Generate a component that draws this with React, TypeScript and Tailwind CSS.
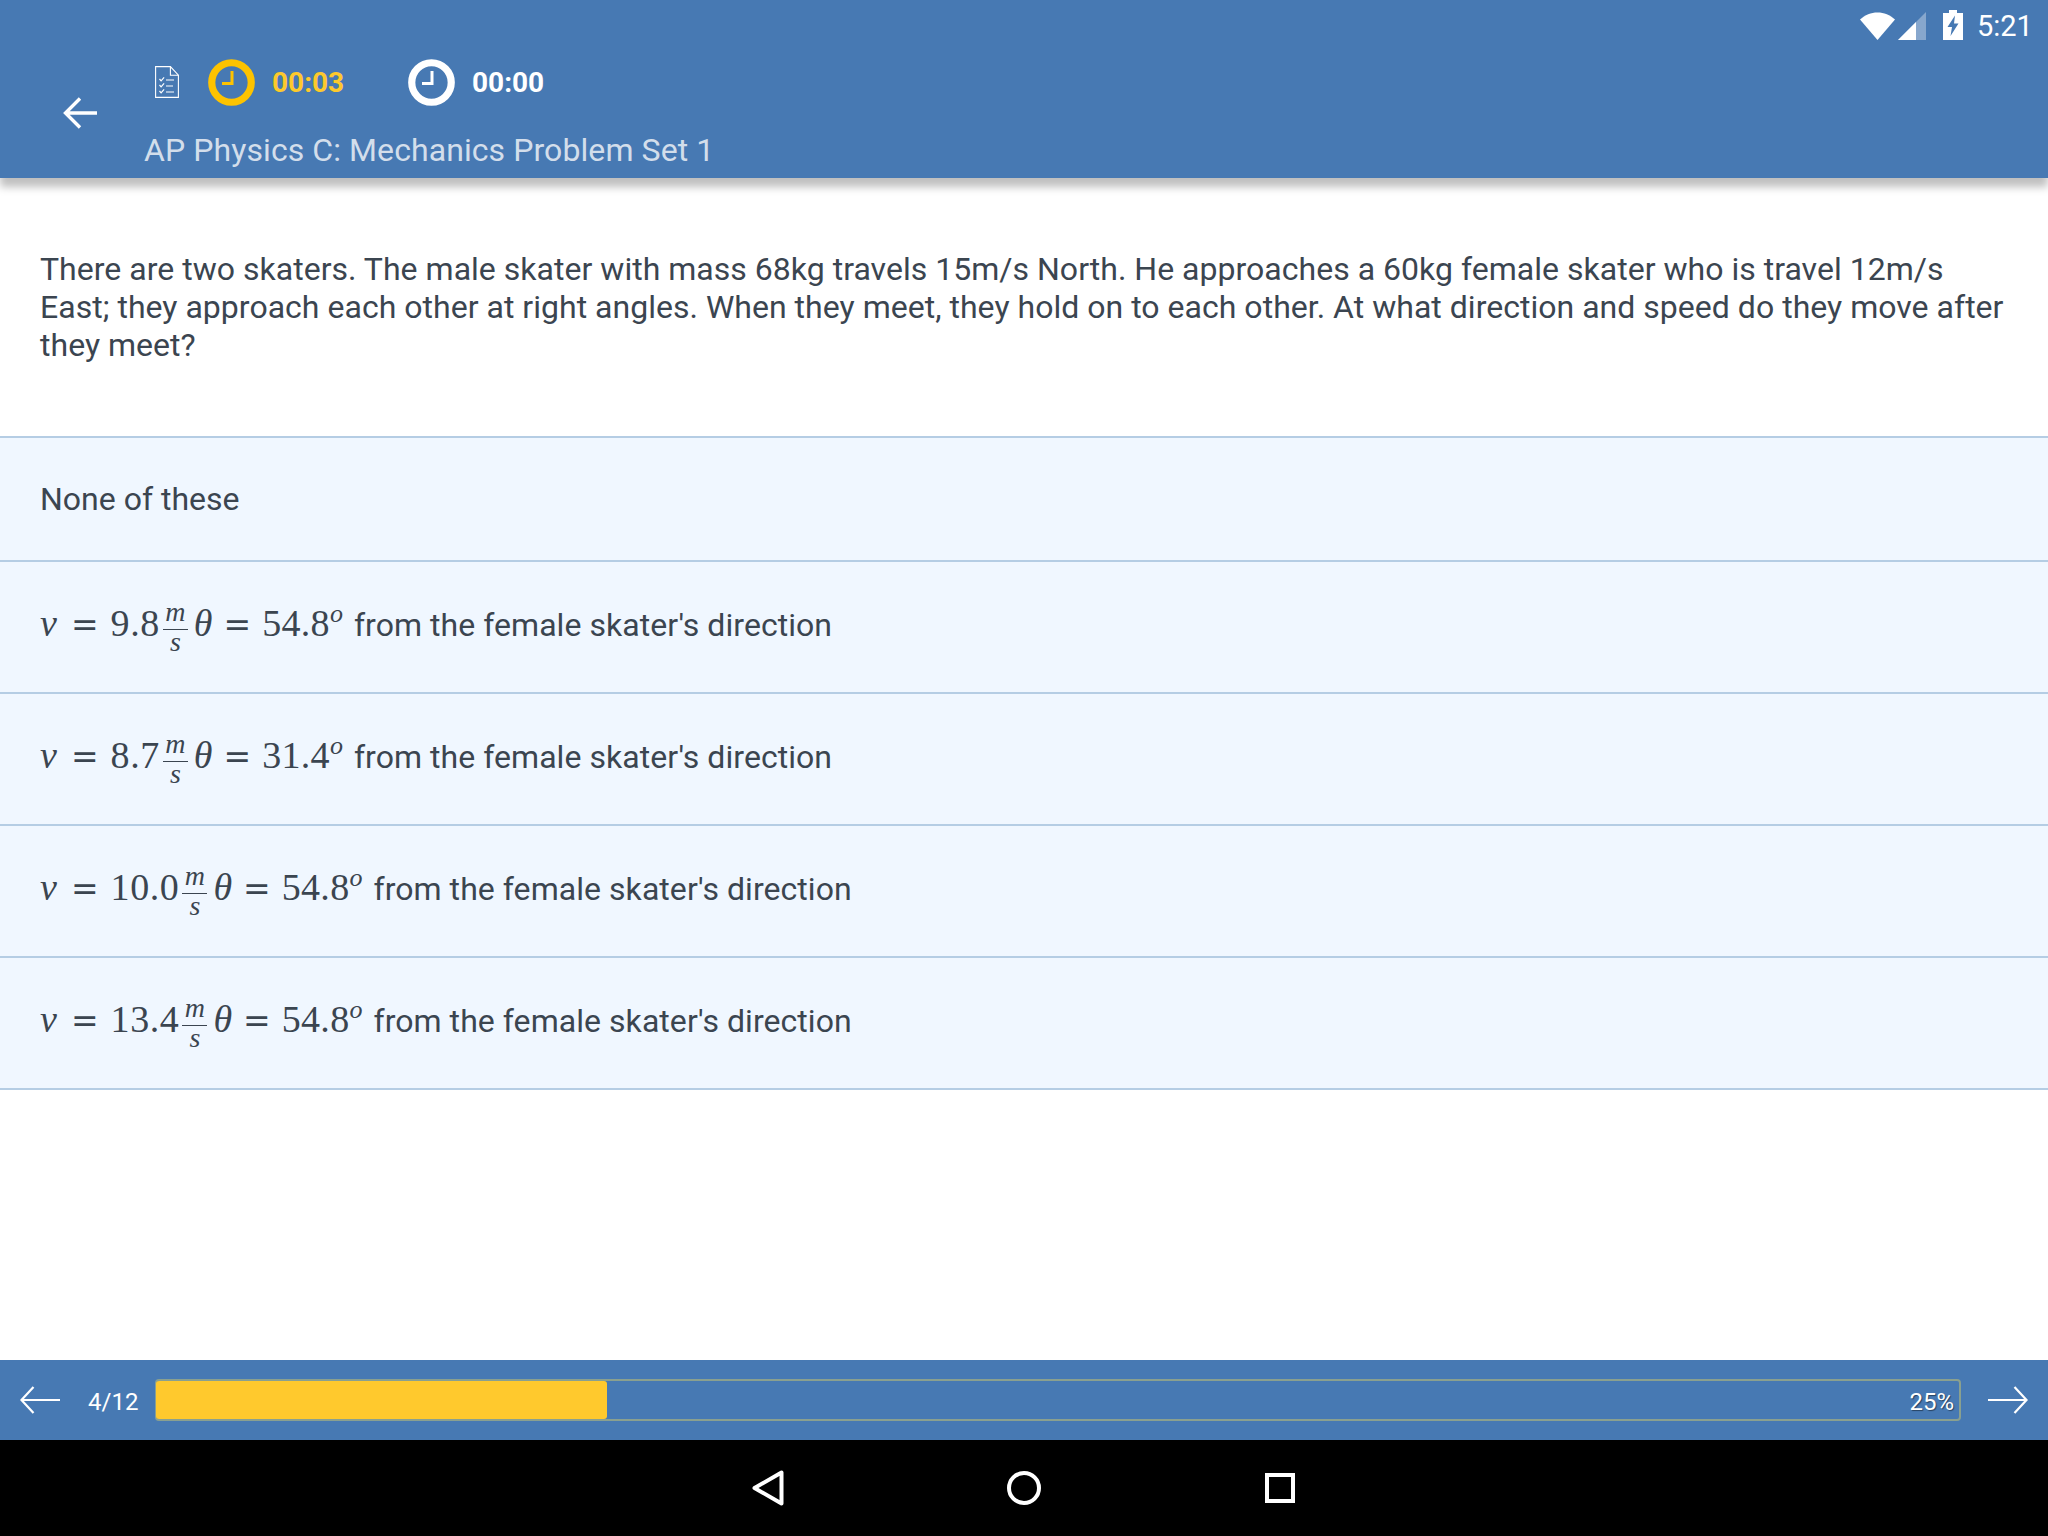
import React from "react";

const roboto = "font-['Roboto',sans-serif]";
const serif = "font-['Liberation_Serif',serif]";
const eq = "font-['DejaVu_Serif',serif] text-[33px]";

function Clock({ color, className }: { color: string; className?: string }) {
  return (
    <svg viewBox="0 0 47 47" className={className} fill="none" stroke={color}>
      <circle cx="23.5" cy="23.5" r="19.75" strokeWidth="7.2" />
      <path d="M24 12v12.5h-10" strokeWidth="3" />
    </svg>
  );
}

function DocIcon() {
  return (
    <svg viewBox="0 0 24 32" className="w-6 h-8" fill="none" stroke="#fff" strokeWidth="1.1">
      <path d="M.6.6h14.8l8 8.6v22.2H.6z" />
      <path d="M15.4.6v8.6h8" />
      <path d="M4.5 13l1.6 1.8 3-3.4M4.5 19l1.6 1.8 3-3.4M4.5 25l1.6 1.8 3-3.4" strokeWidth="1.2" />
      <path d="M11 14h8M11 20h7M11 26h8" strokeWidth="1.2" />
    </svg>
  );
}

function StatusIcons() {
  return (
    <div className="flex items-center justify-end h-[50px] pr-[18px]">
      <svg viewBox="0 0 35 28" className="w-[35px] h-7 mt-[1px]" fill="#fff">
        <path d="M0 7.5C5 3 11 .5 17.5.5S30 3 35 7.5L17.5 28z" />
      </svg>
      <svg viewBox="0 0 28 28" className="w-7 h-7 ml-[3px] mt-[1px]">
        <path d="M28 0v28H0z" fill="#fff" fillOpacity="0.35" />
        <path d="M18 10v18H0z" fill="#fff" />
      </svg>
      <svg viewBox="0 0 20 30" className="w-5 h-[30px] ml-[17px]">
        <path d="M6 0h8v3h6v27H0V3h6z" fill="#fff" />
        <path d="M12 5.5L4.5 17h4.5l-1.5 9 8-12.5h-4.5z" fill="#4779b3" />
      </svg>
      <span className={`${roboto} text-white text-[29px] leading-none ml-[14px] w-[53px] mt-[2px]`}>5:21</span>
    </div>
  );
}

function Header() {
  return (
    <header className="relative z-10 h-[178px] shrink-0 bg-[#4779b3] shadow-[0_9px_8px_rgba(0,0,0,0.25)]">
      <StatusIcons />
      <div className="flex">
        <div className="w-[144px] shrink-0 pl-[63px] pt-[47px]">
          <svg viewBox="0 0 34 32" className="w-[34px] h-8" fill="none" stroke="#fff" strokeWidth="3.4">
            <path d="M34 16H3M17 1.5L2.5 16 17 30.5" />
          </svg>
        </div>
        <div className="flex flex-col">
          <div className="flex items-center h-[48px] mt-[8px]">
            <div className="ml-[11px]"><DocIcon /></div>
            <Clock color="#fdc300" className="w-[47px] h-[47px] ml-[29px]" />
            <span className={`${roboto} font-bold text-[#fdc92c] text-[28px] ml-[17px] w-[136px] mt-[2px]`}>00:03</span>
            <Clock color="#fff" className="w-[47px] h-[47px]" />
            <span className={`${roboto} font-bold text-white text-[28px] ml-[17px] mt-[2px]`}>00:00</span>
          </div>
          <div className={`${roboto} text-[#d3deeb] text-[32px] leading-[38px] mt-[25px] tracking-[0.08px]`}>
            AP Physics C: Mechanics Problem Set 1
          </div>
        </div>
      </div>
    </header>
  );
}

function MathLine({ speed, angle }: { speed: string; angle: string }) {
  return (
    <span className={`${serif} text-[38px] text-[#3b4550]`}>
      <i>v</i>
      <span className={`${eq} ml-[14px]`}>=</span>
      <span className="ml-[12px] tracking-[0.6px]">{speed}</span>
      <span className="inline-flex flex-col items-center w-[25px] ml-[3px] align-[15px] text-[28px] leading-[21px]">
        <i className="border-b-[1.5px] border-[#3b4550] w-full text-center pb-[7px]">m</i>
        <i className="leading-[23px]">s</i>
      </span>
      <i className="ml-[6px]">θ</i>
      <span className={`${eq} ml-[11px]`}>=</span>
      <span className="ml-[11px] tracking-[0.3px]">{angle}</span>
      <i className="text-[26px] align-[14px]">o</i>
    </span>
  );
}

function Option({ speed, angle }: { speed: string; angle: string }) {
  return (
    <div className="h-[132px] flex items-center px-10 border-b-2 border-[#b5cde4] bg-[#f0f7ff]">
      <div className="whitespace-nowrap h-[44px] leading-[44px] mb-[26px]">
        <MathLine speed={speed} angle={angle} />
        <span className={`${roboto} text-[32px] text-[#3b4550] ml-[11px] tracking-[0.05px]`}>from the female skater's direction</span>
      </div>
    </div>
  );
}

function BottomBar() {
  return (
    <footer className="h-[80px] shrink-0 bg-[#4779b3] flex items-center pl-[20px] pr-[20px]">
      <svg viewBox="0 0 40 28" className="w-[40px] h-7 shrink-0" fill="none" stroke="#fff" strokeWidth="2.2">
        <path d="M40 14H2M13.5 1L1.5 14l12 13" />
      </svg>
      <span className={`${roboto} text-white text-[24px] ml-[28px] w-[67px] shrink-0 mt-[3px]`}>4/12</span>
      <div className="relative flex-1 h-[42px] rounded-[4px] border-2 border-[#8aa08f]">
        <div className="h-full w-1/4 bg-[#ffc92d] rounded-[3px] -mx-[1px]" />
        <span className={`absolute right-[5px] top-[3px] ${roboto} text-white text-[24px] [text-shadow:1px_1px_1px_rgba(0,0,0,0.45)]`}>25%</span>
      </div>
      <svg viewBox="0 0 40 28" className="w-[40px] h-7 shrink-0 ml-[27px]" fill="none" stroke="#fff" strokeWidth="2.2">
        <path d="M0 14h38M26.5 1l12 13-12 13" />
      </svg>
    </footer>
  );
}

function NavBar() {
  return (
    <nav className="h-[96px] shrink-0 bg-black flex items-center justify-center pr-[2px]">
      <svg viewBox="0 0 34 38" className="w-[34px] h-[38px] -ml-[1px]" fill="none" stroke="#fff" strokeWidth="4">
        <path d="M30.5 3.5v31L3.5 19z" strokeLinejoin="round" />
      </svg>
      <svg viewBox="0 0 34 34" className="w-[34px] h-[34px] ml-[222px]" fill="none" stroke="#fff" strokeWidth="4">
        <circle cx="17" cy="17" r="15" />
      </svg>
      <svg viewBox="0 0 30 30" className="w-[30px] h-[30px] ml-[224px]" fill="none" stroke="#fff" strokeWidth="4">
        <path d="M2 2h26v26H2z" />
      </svg>
    </nav>
  );
}

export default function App() {
  return (
    <div className="w-[2048px] h-[1536px] flex flex-col bg-white overflow-hidden">
      <Header />
      <main className="flex-1">
        <div className={`h-[258px] flex items-center px-10 ${roboto} text-[32px] leading-[38px] text-[#3b4550] tracking-[0.02px]`}>
          <p>
            There are two skaters. The male skater with mass 68kg travels 15m/s North. He approaches a 60kg female skater who is travel 12m/s East; they approach each other at right angles. When they meet, they hold on to each other. At what direction and speed do they move after they meet?
          </p>
        </div>
        <div className="border-t-2 border-[#b5cde4]">
          <div className={`h-[124px] flex items-center px-10 border-b-2 border-[#b5cde4] bg-[#f0f7ff] ${roboto} text-[32px] text-[#3b4550]`}>
            None of these
          </div>
          <Option speed="9.8" angle="54.8" />
          <Option speed="8.7" angle="31.4" />
          <Option speed="10.0" angle="54.8" />
          <Option speed="13.4" angle="54.8" />
        </div>
      </main>
      <BottomBar />
      <NavBar />
    </div>
  );
}
